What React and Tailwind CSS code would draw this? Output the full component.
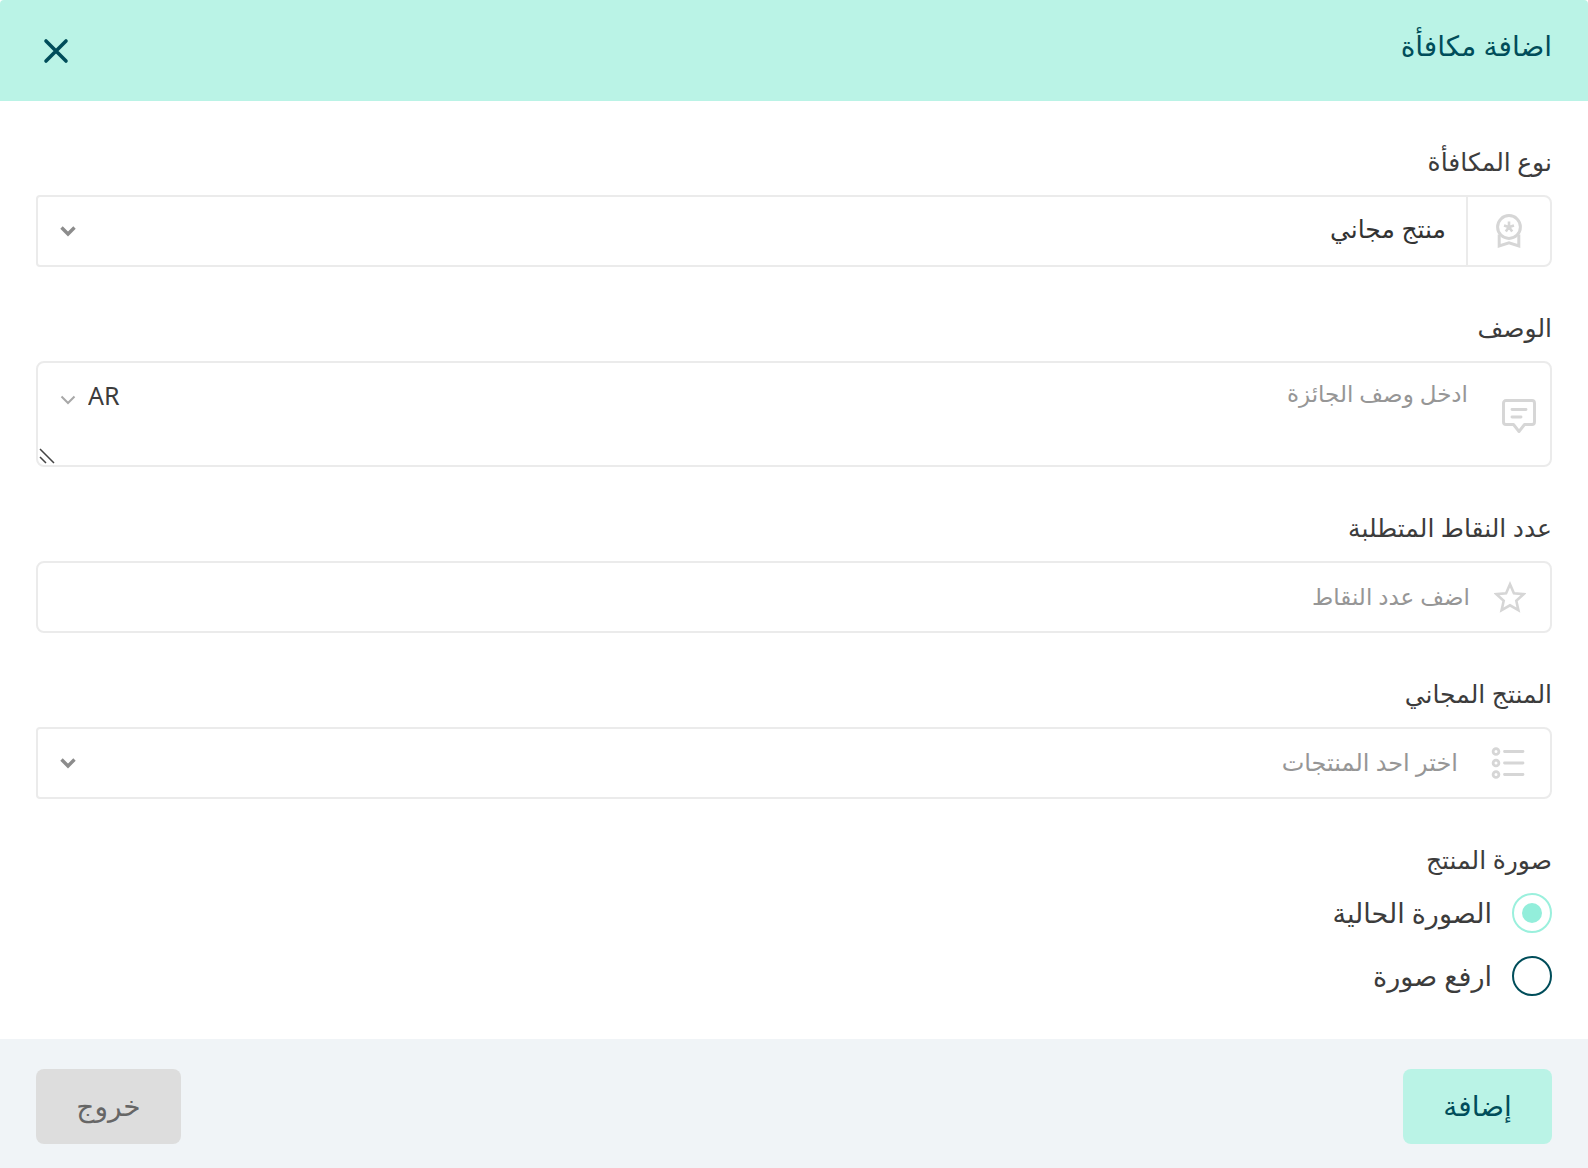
import { useState } from "react";

function CloseIcon() {
  return (
    <svg width="28" height="28" viewBox="0 0 28 28" fill="none" stroke="currentColor" strokeWidth="3.6" strokeLinecap="round">
      <path d="M4 4l20 20M24 4L4 24" />
    </svg>
  );
}

function BadgeIcon() {
  return (
    <svg width="28" height="36" viewBox="0 0 28 36" fill="none" stroke="currentColor" strokeWidth="3">
      <circle cx="14" cy="14" r="11.4" />
      <path d="M4.200 21.500V33l9.800-3.200L23.800 33V21.500" />
      <path d="M14 8.500V14M14 14l5-1.600M14 14l3.200 4.400M14 14l-3.200 4.400M14 14l-5-1.600" strokeWidth="2.600" />
    </svg>
  );
}

function CommentIcon() {
  return (
    <svg width="36" height="36" viewBox="0 0 36 36" fill="none" stroke="currentColor" strokeWidth="2.9" strokeLinecap="round" strokeLinejoin="round">
      <path d="M5 2.500h26a2.500 2.500 0 0 1 2.500 2.500v19a2.500 2.500 0 0 1-2.500 2.500h-7.500L18 33.500l-5.500-7H5A2.500 2.500 0 0 1 2.500 24V5A2.500 2.500 0 0 1 5 2.500z" />
      <path d="M11 11.500h14M11 19h9" />
    </svg>
  );
}

function StarIcon() {
  return (
    <svg width="32" height="32" viewBox="0 0 32 32" fill="none" stroke="currentColor" strokeWidth="2.600" strokeLinejoin="miter">
      <path d="M16 3.300l3.900 9 9.700.9-7.300 6.500 2.100 9.500L16 24.300l-8.400 4.900 2.100-9.500-7.300-6.500 9.700-.9z" />
    </svg>
  );
}

function ListIcon() {
  return (
    <svg width="34" height="34" viewBox="0 0 34 34" fill="none" stroke="currentColor" strokeWidth="2.800" strokeLinecap="round">
      <circle cx="5" cy="5.500" r="2.900" />
      <circle cx="5" cy="17" r="2.900" />
      <circle cx="5" cy="28.500" r="2.900" />
      <path d="M13.500 5.500h18.500M13.500 17h18.500M13.500 28.500h18.500" />
    </svg>
  );
}

function Chevron({ thin }) {
  return (
    <svg width="16" height="12" viewBox="0 0 16 12" fill="none" stroke="currentColor" strokeWidth={thin ? 2 : 3.4}>
      <path d="M1.500 2.500l6.500 6.500 6.500-6.500" />
    </svg>
  );
}

function Field({ id, label, children }) {
  return (
    <div className="flex flex-col gap-[18px]">
      <label htmlFor={id} className="h-8 text-[25px] leading-8 text-[#3c3c3c]">{label}</label>
      {children}
    </div>
  );
}

function RadioOption({ label, value, checked, onChange }) {
  return (
    <label className="flex h-10 items-center gap-5 self-start text-[27px] text-[#3c3c3c]">
      <input
        type="radio"
        name="image"
        value={value}
        checked={checked}
        onChange={() => onChange(value)}
        className="size-10 shrink-0 appearance-none rounded-full border-2 border-[#004d5a] bg-white bg-clip-content p-2 checked:border-[#9bf0dd] checked:bg-[#93eedb]"
      />
      {label}
    </label>
  );
}

export default function App() {
  const [image, setImage] = useState("current");
  const box = "flex rounded-lg border-2 border-[#ebebeb] bg-white";

  return (
    <form dir="rtl" onSubmit={(e) => e.preventDefault()} className="flex min-h-screen flex-col overflow-hidden rounded-t bg-white font-['Noto_Sans','DejaVu_Sans',sans-serif]">
      <header className="flex h-[101px] items-center justify-between bg-[#baf3e6] px-9 text-[#004d5a]">
        <h1 className="pb-3 text-[28px] leading-9">اضافة مكافأة</h1>
        <button type="button" aria-label="إغلاق" className="p-1.5">
          <CloseIcon />
        </button>
      </header>

      <main className="flex flex-1 flex-col gap-11 px-9 pt-11 pb-[43px]">
        <Field id="type" label="نوع المكافأة">
          <div className={`${box} h-[72px] rounded-l`}>
            <span className="flex w-[84px] shrink-0 items-center justify-center border-l-2 border-[#ebebeb] text-[#d6d6d6]">
              <BadgeIcon />
            </span>
            <div className="relative flex flex-1">
              <select id="type" className="flex-1 appearance-none bg-transparent px-5 pb-1 text-[25px] text-[#333333]">
                <option>منتج مجاني</option>
              </select>
              <span className="pointer-events-none absolute inset-y-0 left-[22px] flex items-center text-[#8c8c8c]">
                <Chevron />
              </span>
            </div>
          </div>
        </Field>

        <Field id="description" label="الوصف">
          <div className={`${box} relative h-[106px]`}>
            <span className="flex w-[62px] shrink-0 items-center justify-center pt-1 text-[#d6d6d6]">
              <CommentIcon />
            </span>
            <textarea
              id="description"
              placeholder="ادخل وصف الجائزة"
              className="flex-1 resize-none bg-transparent px-5 py-3.5 text-[23px] leading-8 text-[#333333] placeholder:text-[#969696]"
            />
            <div className="relative flex h-16 w-24 shrink-0">
              <select aria-label="اللغة" dir="ltr" className="flex-1 appearance-none bg-transparent pt-0.5 pl-[50px] text-[25px] text-[#3c3c3c]">
                <option>AR</option>
              </select>
              <span className="pointer-events-none absolute inset-y-0 left-[22px] flex items-center pt-2.5 text-[#a8a8a8]">
                <Chevron thin />
              </span>
            </div>
            <svg className="pointer-events-none absolute bottom-0 left-0" width="18" height="18" viewBox="0 0 18 18" stroke="#444444" strokeWidth="1.5">
              <path d="M2 2l14 14M2 10l6 6" />
            </svg>
          </div>
        </Field>

        <Field id="points" label="عدد النقاط المتطلبة">
          <div className={`${box} h-[72px]`}>
            <span className="flex w-20 shrink-0 items-center justify-center text-[#d6d6d6]">
              <StarIcon />
            </span>
            <input
              id="points"
              type="text"
              placeholder="اضف عدد النقاط"
              className="min-w-0 flex-1 bg-transparent pb-0.5 text-[23px] text-[#333333] placeholder:text-[#969696]"
            />
          </div>
        </Field>

        <Field id="product" label="المنتج المجاني">
          <div className={`${box} h-[72px] rounded-l`}>
            <span className="flex w-[84px] shrink-0 items-center justify-center text-[#d6d6d6]">
              <ListIcon />
            </span>
            <div className="relative flex flex-1">
              <select id="product" className="flex-1 appearance-none bg-transparent px-2 pb-0.5 text-[24px] text-[#969696]">
                <option>اختر احد المنتجات</option>
              </select>
              <span className="pointer-events-none absolute inset-y-0 left-[22px] flex items-center text-[#8c8c8c]">
                <Chevron />
              </span>
            </div>
          </div>
        </Field>

        <fieldset>
          <legend className="mb-[18px] h-8 text-[25px] leading-8 text-[#3c3c3c]">صورة المنتج</legend>
          <div className="flex flex-col gap-[23px]">
            <RadioOption label="الصورة الحالية" value="current" checked={image === "current"} onChange={setImage} />
            <RadioOption label="ارفع صورة" value="upload" checked={image === "upload"} onChange={setImage} />
          </div>
        </fieldset>
      </main>

      <footer className="flex items-start justify-between bg-[#f0f4f7] px-9 pt-[30px] pb-6">
        <button type="submit" className="h-[75px] min-w-[149px] rounded-lg bg-[#baf3e6] px-9 pb-1 text-[28px] text-[#004d5a]">إضافة</button>
        <button type="button" className="h-[75px] min-w-[145px] rounded-lg bg-[#dddddd] px-9 pb-1 text-[28px] text-[#666666]">خروج</button>
      </footer>
    </form>
  );
}
